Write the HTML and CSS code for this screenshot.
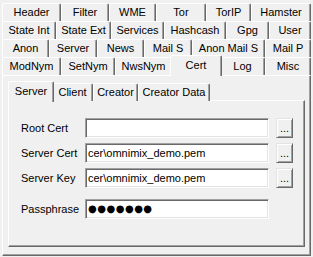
FILE: index.html
```html
<!DOCTYPE html>
<html lang="en">

<head>
    <meta charset="UTF-8">
    <title>Cert</title>
    <link rel="stylesheet" href="styles.css">
</head>

<body>

    <div class="tabs">
        <div class="tab-row row1">
            <div class="tab">Header</div>
            <div class="tab">Filter</div>
            <div class="tab">WME</div>
            <div class="tab">Tor</div>
            <div class="tab">TorIP</div>
            <div class="tab">Hamster</div>
        </div>
        <div class="tab-row row2">
            <div class="tab">State Int</div>
            <div class="tab">State Ext</div>
            <div class="tab">Services</div>
            <div class="tab">Hashcash</div>
            <div class="tab">Gpg</div>
            <div class="tab">User</div>
        </div>
        <div class="tab-row row3">
            <div class="tab">Anon</div>
            <div class="tab">Server</div>
            <div class="tab">News</div>
            <div class="tab">Mail S</div>
            <div class="tab">Anon Mail S</div>
            <div class="tab">Mail P</div>
        </div>
        <div class="tab-row row4">
            <div class="tab">ModNym</div>
            <div class="tab">SetNym</div>
            <div class="tab">NwsNym</div>
            <div class="tab active">Cert</div>
            <div class="tab">Log</div>
            <div class="tab">Misc</div>
        </div>

        <div class="pane">
            <div class="tab-row subtabs">
                <div class="tab active">Server</div>
                <div class="tab">Client</div>
                <div class="tab">Creator</div>
                <div class="tab">Creator Data</div>
            </div>

            <div class="subpane">
                <div class="form">
                    <label class="label">Root Cert</label>
                    <div class="field"></div>
                    <button class="browse">...</button>

                    <label class="label">Server Cert</label>
                    <div class="field">cer\omnimix_demo.pem</div>
                    <button class="browse">...</button>

                    <label class="label">Server Key</label>
                    <div class="field">cer\omnimix_demo.pem</div>
                    <button class="browse">...</button>

                    <label class="label pass">Passphrase</label>
                    <div class="field pass dots">●●●●●●●</div>
                </div>
            </div>
        </div>
    </div>

</body>

</html>
```
FILE: styles.css
```css
body {
    margin: 0;
    background-color: #f0f0f0;
    font-family: "Liberation Sans", Arial, sans-serif;
    font-size: 11px;
    color: #000;
}

.tabs {
    width: 313px;
    height: 257px;
    padding: 3px 2px 1px 2px;
    box-sizing: border-box;
}

.tab-row {
    display: grid;
    height: 18px;
}

.row1 {
    grid-template-columns: 59px 48px 47px 50px 45px 60px;
}

.row2 {
    grid-template-columns: 54px 55px 53px 62px 43px 42px;
}

.row3 {
    grid-template-columns: 47px 48px 47px 48px 73px 46px;
}

.row4 {
    grid-template-columns: 59px 54px 57px 48px 45px 46px;
}

.tab {
    border-top: 1px solid #fff;
    border-left: 1px solid #fff;
    border-right: 1px solid #696969;
    border-radius: 2px 2px 0 0;
    box-shadow: inset -1px 0 #a0a0a0;
    background-color: #f0f0f0;
    text-align: center;
    line-height: 17px;
    white-space: nowrap;
}

.tab.active {
    margin: -2px -2px -1px -2px;
    line-height: 18px;
    z-index: 1;
}

.pane {
    height: 181px;
    box-sizing: border-box;
    border-top: 1px solid #fff;
    border-left: 1px solid #fff;
    border-right: 1px solid #696969;
    border-bottom: 1px solid #696969;
    box-shadow: inset -1px -1px #a0a0a0;
    padding: 7px 5px 0 5px;
}

.subtabs {
    height: 17px;
    padding-left: 2px;
    grid-template-columns: 42px 41px 45px 72px;
}

.subpane {
    height: 147px;
    width: 297px;
    box-sizing: border-box;
    border-top: 1px solid #fff;
    border-left: 1px solid #fff;
    border-right: 1px solid #696969;
    border-bottom: 1px solid #696969;
    box-shadow: inset -1px -1px #a0a0a0;
    padding: 17px 0 0 12px;
}

.form {
    display: grid;
    grid-template-columns: 57px 184px 17px;
    grid-auto-rows: 20px;
    column-gap: 7px;
    row-gap: 5px;
    align-items: center;
}

.label {
    white-space: nowrap;
}

.field {
    height: 20px;
    box-sizing: border-box;
    background-color: #fff;
    border-top: 1px solid #a0a0a0;
    border-left: 1px solid #a0a0a0;
    border-right: 1px solid #fff;
    border-bottom: 1px solid #fff;
    box-shadow: inset 1px 1px #696969, inset -1px -1px #e3e3e3;
    padding: 0 2px;
    line-height: 18px;
    white-space: nowrap;
    overflow: hidden;
}

.pass {
    margin-top: 11px;
}

.dots {
    font-family: "DejaVu Sans", sans-serif;
    font-size: 10px;
    letter-spacing: 0.5px;
    padding-left: 2px;
}

.browse {
    height: 20px;
    width: 17px;
    box-sizing: border-box;
    padding: 0;
    background-color: #f0f0f0;
    border-top: 1px solid #e3e3e3;
    border-left: 1px solid #e3e3e3;
    border-right: 1px solid #696969;
    border-bottom: 1px solid #696969;
    box-shadow: inset 1px 1px #fff, inset -1px -1px #a0a0a0;
    font-family: "Liberation Sans", Arial, sans-serif;
    font-size: 11px;
    line-height: 16px;
    color: #000;
}
```
